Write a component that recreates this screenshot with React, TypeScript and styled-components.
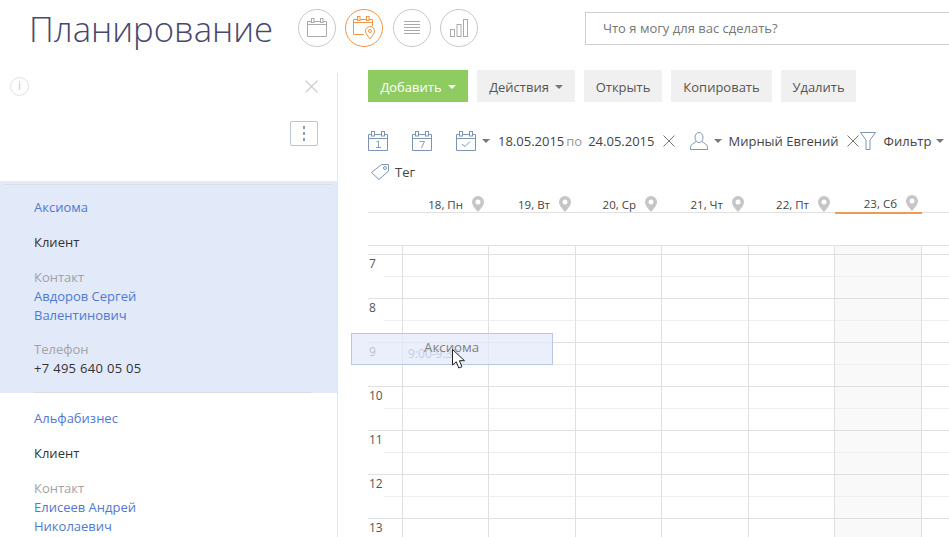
import React from "react";
import styled, { createGlobalStyle } from "styled-components";

const GlobalStyle = createGlobalStyle`
  html, body {
    margin: 0;
    padding: 0;
    background: #fff;
    font-family: "Open Sans", "Liberation Sans", sans-serif;
    font-size: 13px;
    color: #444;
  }
`;

const HOURS = [7, 8, 9, 10, 11, 12, 13];
const DAYS = ["18, Пн", "19, Вт", "20, Ср", "21, Чт", "22, Пт", "23, Сб"];

function CalendarIcon({ children }: { children?: React.ReactNode }) {
  return (
    <svg width="20" height="20" viewBox="0 0 20 20" fill="none" stroke="#7f94b3" strokeWidth="1">
      <path d="M3.5 3.5H0.5V19.5H19.5V3.5H16.5M6.5 3.5H13.5M0.5 7.5H19.5" />
      <rect x="3.5" y="0.5" width="3" height="4.5" />
      <rect x="13.5" y="0.5" width="3" height="4.5" />
      {children}
    </svg>
  );
}

function Pin() {
  return (
    <svg width="12" height="16" viewBox="0 0 12 16">
      <path
        fillRule="evenodd"
        fill="#c6c6c6"
        d="M6 0a6 6 0 0 1 6 6c0 3.5-3.6 7.2-6 10C3.6 13.200 0 9.500 0 6a6 6 0 0 1 6-6zm0 3.500a2.500 2.500 0 1 0 0 5 2.500 2.500 0 0 0 0-5z"
      />
    </svg>
  );
}

function Cross({ color = "#777", size = 12 }: { color?: string; size?: number }) {
  return (
    <svg width={size} height={size} viewBox="0 0 12 12" stroke={color} strokeWidth="1">
      <path d="M0.500 0.500L11.500 11.500M11.500 0.500L0.500 11.500" />
    </svg>
  );
}

function App() {
  return (
    <Page>
      <GlobalStyle />
      <Header>
        <Title>Планирование</Title>
        <ViewSwitch>
          <ViewButton>
            <svg width="22" height="20" viewBox="0 0 22 20" fill="none" stroke="#aaa">
              <path d="M5 3.500H1.500V18.500H20.500V3.500H17M8 3.500H14M1.500 6.500H20.500" />
              <rect x="5.500" y="0.500" width="2.500" height="4" />
              <rect x="14.500" y="0.500" width="2.500" height="4" />
            </svg>
          </ViewButton>
          <ViewButton $active>
            <svg width="24" height="24" viewBox="0 0 24 24" fill="none" stroke="#f0954a">
              <path d="M5 3.500H1.500V18.500H12M20.500 10V3.500H17M8 3.500H14M1.500 6.500H20.500" />
              <rect x="5.500" y="0.500" width="2.500" height="4" />
              <rect x="14.500" y="0.500" width="2.500" height="4" />
              <path d="M18 10.500a4.500 4.500 0 0 1 4.500 4.500c0 2.800-2.600 5-4.500 8-1.900-3-4.500-5.200-4.500-8a4.500 4.500 0 0 1 4.500-4.500z" />
              <circle cx="18" cy="15" r="1.500" />
            </svg>
          </ViewButton>
          <ViewButton>
            <svg width="16" height="15" viewBox="0 0 16 15" stroke="#aaa">
              <path d="M0 0.500H16M0 3.500H16M0 6.500H16M0 9.500H16M0 12.500H16" />
            </svg>
          </ViewButton>
          <ViewButton>
            <svg width="18" height="18" viewBox="0 0 18 18" fill="none" stroke="#aaa">
              <rect x="0.500" y="10.500" width="4" height="7" />
              <rect x="7" y="5.500" width="4" height="12" />
              <rect x="13.500" y="0.500" width="4" height="17" />
            </svg>
          </ViewButton>
        </ViewSwitch>
        <Search>Что я могу для вас сделать?</Search>
      </Header>
      <Main>
        <Side>
          <SideTop>
            <SideTopRow>
              <InfoIcon>i</InfoIcon>
              <Cross color="#c4c4c4" size={13} />
            </SideTopRow>
            <KebabButton>
              <Dot />
              <Dot />
              <Dot />
            </KebabButton>
          </SideTop>
          <Card $selected>
            <CardLine />
            <LinkText>Аксиома</LinkText>
            <Spaced>Клиент</Spaced>
            <Label>Контакт</Label>
            <LinkText>Авдоров Сергей</LinkText>
            <LinkText>Валентинович</LinkText>
            <Label $gap>Телефон</Label>
            <Phone>+7 495 640 05 05</Phone>
          </Card>
          <Card>
            <LinkText>Альфабизнес</LinkText>
            <Spaced>Клиент</Spaced>
            <Label>Контакт</Label>
            <LinkText>Елисеев Андрей</LinkText>
            <LinkText>Николаевич</LinkText>
          </Card>
        </Side>
        <Content>
          <Actions>
            <ActionButton $primary $width={100}>
              Добавить <Caret $light />
            </ActionButton>
            <ActionButton $width={98}>
              Действия <Caret />
            </ActionButton>
            <ActionButton $width={78}>Открыть</ActionButton>
            <ActionButton $width={101}>Копировать</ActionButton>
            <ActionButton $width={75}>Удалить</ActionButton>
          </Actions>
          <Filters>
            <ToolIcon $mr={24}>
              <CalendarIcon>
                <path d="M8.500 11L10.500 10V17M8 16.500H13" strokeWidth="0.900" />
              </CalendarIcon>
            </ToolIcon>
            <ToolIcon $mr={24}>
              <CalendarIcon>
                <path d="M7.500 10.500H12.500L9.500 17" strokeWidth="0.900" />
              </CalendarIcon>
            </ToolIcon>
            <ToolIcon $mr={6}>
              <CalendarIcon>
                <path d="M6 13L9 15.500L14 10.500" />
              </CalendarIcon>
            </ToolIcon>
            <Caret $mr={8} />
            <FilterText>18.05.2015</FilterText>
            <MutedText>по</MutedText>
            <FilterText>24.05.2015</FilterText>
            <ToolIcon $ml={9} $mr={15}>
              <Cross />
            </ToolIcon>
            <ToolIcon $mr={6}>
              <svg width="18" height="18" viewBox="0 0 18 18" fill="none" stroke="#7f94b3">
                <ellipse cx="9" cy="5.500" rx="4" ry="5" />
                <path d="M6 9.500C4 11.500 0.500 12 0.500 15.500V17.500H17.500V15.500C17.500 12 14 11.500 12 9.500" />
              </svg>
            </ToolIcon>
            <Caret $mr={6} />
            <FilterText>Мирный Евгений</FilterText>
            <ToolIcon $ml={8} $mr={1}>
              <Cross />
            </ToolIcon>
            <ToolIcon $mr={8}>
              <svg width="16" height="18" viewBox="0 0 16 18" fill="none" stroke="#7f94b3">
                <path d="M0.500 0.500H15.500L10 8V17.500H6V8Z" />
              </svg>
            </ToolIcon>
            <FilterText>Фильтр</FilterText>
            <Caret $ml={5} />
            <ToolIcon $ml={3} $mr={6}>
              <svg width="18" height="16" viewBox="0 0 18 16" fill="none" stroke="#7f94b3">
                <path d="M10.500 0.500H17.500V7L8 15.500L0.500 8.500Z" />
                <circle cx="14" cy="4" r="1.500" />
              </svg>
            </ToolIcon>
            <FilterText>Тег</FilterText>
          </Filters>
          <DayHeader>
            <div />
            {DAYS.map((day, i) => (
              <DayCell key={day} $current={i === 5}>
                {day}
                <Pin />
              </DayCell>
            ))}
          </DayHeader>
          <AllDay />
          <Schedule>
            <LeadRow>
              <div />
              {Array.from({ length: 7 }, (_, i) => (
                <SlotCell key={i} $weekend={i === 5} />
              ))}
            </LeadRow>
            {HOURS.map((hour) => (
              <HourRow key={hour}>
                <HourLabel>{hour}</HourLabel>
                {Array.from({ length: 7 }, (_, i) => (
                  <SlotCell key={i} $weekend={i === 5} $half />
                ))}
              </HourRow>
            ))}
          </Schedule>
          <DragGhost>
            <GhostTime>9:00-9:30</GhostTime>
            <GhostTitle>Аксиома</GhostTitle>
          </DragGhost>
          <Pointer width="15" height="21" viewBox="0 0 15 21">
            <path
              d="M0.500 0.500V16L4.300 12.800L6.800 19L10 17.700L7.400 11.700H12.500Z"
              fill="#fff"
              stroke="#222"
              strokeWidth="1"
            />
          </Pointer>
        </Content>
      </Main>
    </Page>
  );
}

const Page = styled.div`
  width: 949px;
  height: 537px;
  overflow: hidden;
`;

const Header = styled.header`
  display: flex;
  align-items: flex-start;
  height: 70px;
  padding-left: 29px;
`;

const Title = styled.h1`
  flex: none;
  width: 244px;
  margin: 6px 25px 0 0;
  font-size: 34.7px;
  line-height: 46px;
  font-weight: 300;
  color: #47476f;
  white-space: nowrap;
`;

const ViewSwitch = styled.div`
  display: flex;
  gap: 9.34px;
  margin-top: 9px;
`;

const ViewButton = styled.div<{ $active?: boolean }>`
  display: flex;
  align-items: center;
  justify-content: center;
  width: 38px;
  height: 38px;
  box-sizing: border-box;
  border-radius: 50%;
  border: 1px solid ${(p) => (p.$active ? "#f0954a" : "#c8c8c8")};
`;

const Search = styled.div`
  flex: 1;
  height: 33px;
  margin: 12px -5px 0 107px;
  padding-left: 17px;
  box-sizing: border-box;
  border: 1px solid #d0d0d0;
  line-height: 31px;
  font-size: 13px;
  color: #777;
`;

const Main = styled.main`
  display: flex;
  align-items: flex-start;
`;

const Side = styled.aside`
  flex: none;
  width: 338px;
  height: 464px;
  margin-top: 3px;
  box-sizing: border-box;
  border-right: 1px solid #e6e6e6;
  overflow: hidden;
`;

const SideTop = styled.div`
  display: flex;
  flex-direction: column;
  height: 108px;
  padding: 4px 19px 0 10px;
  box-sizing: border-box;
`;

const SideTopRow = styled.div`
  display: flex;
  align-items: center;
  justify-content: space-between;
`;

const InfoIcon = styled.div`
  width: 19px;
  height: 19px;
  box-sizing: border-box;
  border: 1px solid #e2e2e2;
  border-radius: 50%;
  text-align: center;
  line-height: 16px;
  font-size: 12px;
  color: #c8c8c8;
`;

const KebabButton = styled.div`
  display: flex;
  flex-direction: column;
  align-items: center;
  justify-content: center;
  gap: 3px;
  align-self: flex-end;
  width: 28px;
  height: 25px;
  margin-top: 25px;
  box-sizing: border-box;
  border: 1px solid #b9c4d6;
  border-radius: 2px;
`;

const Dot = styled.span`
  width: 2px;
  height: 3px;
  background: #8c9cb8;
`;

const Card = styled.section<{ $selected?: boolean }>`
  position: relative;
  height: ${(p) => (p.$selected ? "212px" : "auto")};
  padding: ${(p) => (p.$selected ? "17px" : "16px")} 26px 0 34px;
  box-sizing: border-box;
  background: ${(p) => (p.$selected ? "#e2e9f9" : "#fff")};
  line-height: 19px;
  ${(p) => p.$selected && "&::after { content: ''; position: absolute; left: 34px; right: 26px; bottom: 0; height: 1px; background: #dcdcdc; }"}
`;

const CardLine = styled.div`
  position: absolute;
  top: 3px;
  left: 4px;
  right: 5px;
  height: 1px;
  background: #dcdde2;
`;

const LinkText = styled.div`
  color: #4f79d2;
`;

const Plain = styled.div`
  color: #333;
`;

const Phone = styled(Plain)`
  letter-spacing: 0.3px;
`;

const Spaced = styled(Plain)`
  margin-top: 16px;
`;

const Label = styled.div<{ $gap?: boolean }>`
  margin-top: ${(p) => (p.$gap ? "15px" : "16px")};
  color: #a3a3a3;
`;

const Content = styled.div`
  position: relative;
  flex: 1;
  min-width: 0;
  height: 467px;
  padding-left: 30px;
  overflow: hidden;
`;

const Actions = styled.div`
  display: flex;
  gap: 9px;
`;

const ActionButton = styled.div<{ $primary?: boolean; $width: number }>`
  display: flex;
  align-items: center;
  justify-content: center;
  gap: 6px;
  width: ${(p) => p.$width}px;
  height: 32px;
  padding-top: 1px;
  box-sizing: border-box;
  background: ${(p) => (p.$primary ? "#8ecb60" : "#f0f0f0")};
  color: ${(p) => (p.$primary ? "#fff" : "#555")};
  font-weight: ${(p) => (p.$primary ? 500 : 400)};
`;

const Caret = styled.span<{ $light?: boolean; $mr?: number; $ml?: number }>`
  flex: none;
  width: 0;
  height: 0;
  margin: 0 ${(p) => p.$mr ?? 0}px 0 ${(p) => p.$ml ?? 0}px;
  border-left: 4px solid transparent;
  border-right: 4px solid transparent;
  border-top: 4px solid ${(p) => (p.$light ? "#fff" : "#777")};
`;

const Filters = styled.div`
  display: flex;
  flex-wrap: wrap;
  align-items: center;
  row-gap: 9px;
  margin-top: 28px;
`;

const ToolIcon = styled.span<{ $mr?: number; $ml?: number }>`
  display: flex;
  align-items: center;
  height: 22px;
  margin: 0 ${(p) => p.$mr ?? 0}px 0 ${(p) => p.$ml ?? 0}px;
`;

const FilterText = styled.span`
  line-height: 22px;
  color: #444;
  white-space: nowrap;
`;

const MutedText = styled(FilterText)`
  margin: 0 6px 0 2px;
  color: #999;
`;

const columns = "34px 86px 87px 86px 87px 86px 87px 1fr";

const DayHeader = styled.div`
  display: grid;
  grid-template-columns: ${columns};
  height: 18px;
  margin-top: 11px;
  border-bottom: 1px solid #e0e0e0;
`;

const DayCell = styled.div<{ $current?: boolean }>`
  display: flex;
  align-items: center;
  justify-content: flex-end;
  gap: 9px;
  height: ${(p) => (p.$current ? "18px" : "auto")};
  margin: ${(p) => (p.$current ? "0 -1px 0 1px" : "0")};
  padding-right: 4px;
  border-bottom: ${(p) => (p.$current ? "2px solid #ef9b54" : "0")};
  font-size: 11.5px;
  color: #444;
  white-space: nowrap;
`;

const AllDay = styled.div`
  height: 32px;
`;

const Schedule = styled.div`
  border-bottom: 1px solid #e0e0e0;
`;

const LeadRow = styled.div`
  display: grid;
  grid-template-columns: ${columns};
  height: 8px;
  border-top: 1px solid #e0e0e0;
`;

const HourRow = styled.div`
  display: grid;
  grid-template-columns: ${columns};
  height: 43px;
  border-top: 1px solid #e0e0e0;
`;

const HourLabel = styled.div`
  position: relative;
  padding-left: 1px;
  font-size: 12px;
  line-height: 18px;
  color: #555;

  &::after {
    content: "";
    position: absolute;
    left: 16px;
    right: 0;
    top: 21px;
    height: 1px;
    background: #eee;
  }
`;

const SlotCell = styled.div<{ $weekend?: boolean; $half?: boolean }>`
  position: relative;
  border-left: 1px solid #e0e0e0;
  background: ${(p) => (p.$weekend ? "#f9f9f9" : "transparent")};

  ${(p) =>
    p.$half &&
    `&::after {
      content: "";
      position: absolute;
      left: 0;
      right: 0;
      top: 21px;
      height: 1px;
      background: #eee;
    }`}
`;

const DragGhost = styled.div`
  position: absolute;
  left: 13px;
  top: 263px;
  width: 202px;
  height: 32px;
  box-sizing: border-box;
  border: 1px solid #b7c7e6;
  background: rgba(226, 233, 249, 0.72);
`;

const GhostTime = styled.span`
  position: absolute;
  left: 56px;
  top: 11px;
  font-size: 12px;
  color: #c3cde6;
  white-space: nowrap;
`;

const GhostTitle = styled.span`
  position: absolute;
  left: 72px;
  top: 4px;
  font-size: 13.3px;
  color: #808080;
  white-space: nowrap;
`;

const Pointer = styled.svg`
  position: absolute;
  left: 114px;
  top: 279px;
`;

export default App;
